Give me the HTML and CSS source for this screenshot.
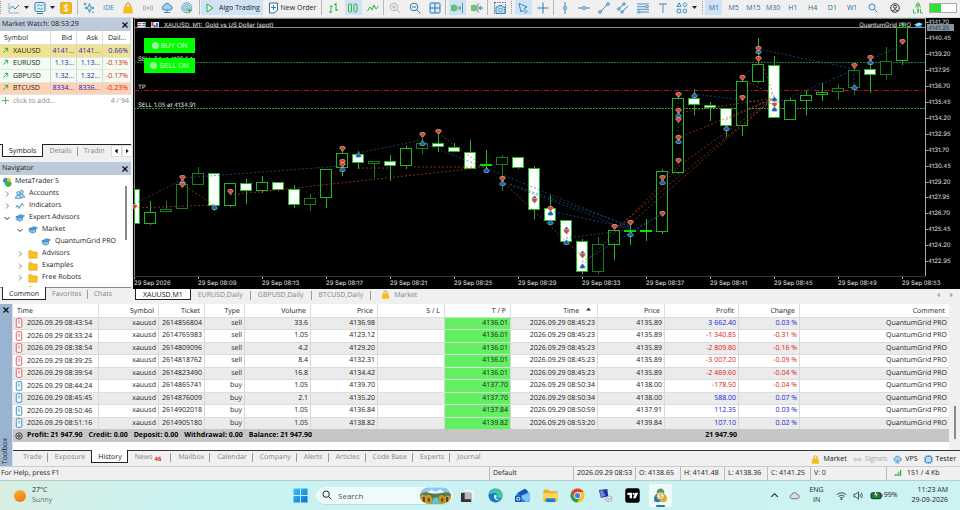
FILE: index.html
```
<!DOCTYPE html>
<html lang="en">
<head>
<meta charset="utf-8">
<title>XAUUSD,M1</title>
<link rel="stylesheet" href="styles.css">
</head>
<body>
<svg class="sprite" aria-hidden="true">
  <symbol id="i-hat" viewBox="0 0 12 12"><path d="M1 4.500 7 2l4.500 1.500L6 6z" fill="#4aa3df" stroke="#1f6fae" stroke-width=".7"/><path d="M3 5.500v3.500l3 .8 3-1.500V4.800L6 6z" fill="#8cc8ee" stroke="#1f6fae" stroke-width=".7"/><path d="M1.500 4.600v4" stroke="#1f6fae" stroke-width=".8"/></symbol>
  <symbol id="i-folder" viewBox="0 0 12 12"><path d="M1 2h4l1 1.500h5V11H1z" fill="#f8c21c" stroke="#d79a00" stroke-width=".6"/></symbol>
  <symbol id="i-bag" viewBox="0 0 12 12"><path d="M4 5V3a2 2 0 0 1 4 0v2" fill="none" stroke="#c58a00" stroke-width="1"/><path d="M2 4.500h8l1 7H1z" fill="#f6bd16"/></symbol>
  <symbol id="i-cloud" viewBox="0 0 12 12"><path d="M3 8a2.300 2.300 0 0 1 0-4.500 3.200 3.200 0 0 1 6 0A2.300 2.300 0 0 1 9.500 8z" fill="#9fd0f2" stroke="#2b7cc0" stroke-width=".9"/><path d="M6 8v2.500M3 10.500h6" stroke="#2b7cc0" stroke-width=".9"/></symbol>
  <symbol id="i-signal" viewBox="0 0 12 12"><g fill="none" stroke="currentColor" stroke-width=".9"><circle cx="6" cy="6" r="1"/><path d="M4 4q-1.300 2 0 4M8 4q1.300 2 0 4M2.300 3q-2 3 0 6M9.700 3q2 3 0 6"/></g></symbol>
  <symbol id="i-doc" viewBox="0 0 8 11"><rect x="1" y=".8" width="6" height="9.400" rx="1" fill="#fff" stroke="currentColor" stroke-width="1"/><path d="M3 3.500h2M3 5.500h2" stroke="currentColor" stroke-width=".9"/></symbol>
  <symbol id="i-up" viewBox="0 0 8 8"><path d="M1.500 6.500l5-5M3 1.500h3.500V5" fill="none" stroke="#23a03a" stroke-width="1"/></symbol>
  <symbol id="i-right" viewBox="0 0 8 8"><path d="M3 1.500 5.500 4 3 6.500" fill="none" stroke="#777" stroke-width=".9"/></symbol>
  <symbol id="i-down" viewBox="0 0 8 8"><path d="M1.500 3 4 5.500 6.500 3" fill="none" stroke="#333" stroke-width="1"/></symbol>
  <symbol id="i-x" viewBox="0 0 8 8"><path d="m1.500 1.500 5 5m0-5-5 5" stroke="#111" stroke-width="1.300"/></symbol>
</svg>

<header class="toolbar">
  <span class="grip"></span>
  <div class="group g-charts">
    <button aria-label="Chart type"><svg viewBox="0 0 12 12"><path d="M1 1v10h10" fill="none" stroke="#9aa" stroke-width=".9"/><path d="m1.500 7 3-3 2.500 3 4-4" fill="none" stroke="#2a82b8" stroke-width="1"/></svg></button>
    <i class="caret"></i>
    <button aria-label="Indicators"><svg viewBox="0 0 12 12"><rect x="1" y="0.500" width="10" height="9" rx="1.500" fill="#dff0f8" stroke="#2a82b8"/><path d="m3 4 2-1.500 2 1.500 2.500-1.500" fill="none" stroke="#2a82b8" stroke-width=".8"/><path d="m3 7.500 2-1.500 2 1.500 2.500-1.500" fill="none" stroke="#35b24a" stroke-width=".8"/><path d="M3 11.500h6" stroke="#2a82b8"/></svg></button>
    <i class="caret"></i>
    <button aria-label="Deposit"><svg viewBox="0 0 12 12"><rect x=".5" y=".5" width="11" height="11" rx="1.500" fill="#f3b91a" stroke="#d79a00" stroke-width=".7"/><path d="M8 3.700Q6 2.500 4.500 3.700T6 6t1.500 2.300T4 8.300M6 2v8" fill="none" stroke="#fff" stroke-width=".9"/></svg></button>
  </div>
  <span class="sep"></span>
  <div class="group g-apps">
    <button aria-label="Assistant"><svg viewBox="0 0 12 12"><path d="m6.500 1.500 1.200 3.300L11 6 7.700 7.200 6.500 10.500 5.300 7.200 2 6l3.300-1.200z" fill="#cfe7f7" stroke="#2a82b8" stroke-width=".9"/><path d="M2 .5v3M.5 2h3M10 9v2.500" stroke="#2a82b8" stroke-width=".8"/></svg></button>
    <button class="word ide">IDE</button>
    <button aria-label="Market"><svg><use href="#i-bag"/></svg></button>
    <button aria-label="Signals" class="faint"><svg><use href="#i-signal"/></svg></button>
    <button aria-label="VPS"><svg><use href="#i-cloud"/></svg></button>
    <button aria-label="Strategy tester"><svg viewBox="0 0 12 12"><g fill="none" stroke="#3586b8" stroke-width=".8"><circle cx="5.800" cy="5.800" r="5"/><circle cx="5.800" cy="5.800" r="3.200"/><circle cx="5.800" cy="5.800" r="1.300"/></g><path d="m6.500 6.500 5 2-2 .8-.8 2.200z" fill="#35b24a"/></svg></button>
  </div>
  <span class="sep"></span>
  <button class="algo on"><svg viewBox="0 0 12 12"><path d="m3 2 6 4-6 4z" fill="#e5f7e9" stroke="#30a648"/></svg>Algo Trading</button>
  <button class="order"><svg viewBox="0 0 12 12"><path d="M2.500 1h8v7l-3 3h-5z" fill="#fff" stroke="#2a6a9b"/><path d="M6.500 3v5M4 5.500h5" stroke="#2a82b8"/></svg>New Order</button>
  <span class="sep"></span>
  <div class="group g-style">
    <button aria-label="Bars"><svg viewBox="0 0 12 12"><path d="M4 3v8M2 10h2M4 4.500h1.500M9 1v8M7 2.500h2M9 8h2" fill="none" stroke="#2cae40"/></svg></button>
    <button aria-label="Candles" class="on"><svg viewBox="0 0 12 12"><rect x="1.500" y="2" width="3" height="8" rx="1" fill="none" stroke="#2cae40"/><rect x="7" y="2" width="3" height="8" rx="1" fill="none" stroke="#2cae40"/></svg></button>
    <button aria-label="Line"><svg viewBox="0 0 12 12"><path d="m.5 9 2.500-4 2 3 2-5 2 4 2.500-3" fill="none" stroke="#2cae40"/></svg></button>
  </div>
  <span class="sep"></span>
  <div class="group g-zoom">
    <button aria-label="Zoom in"><svg viewBox="0 0 12 12"><g fill="none" stroke="#b5b5b5"><circle cx="5" cy="5" r="3.800"/><path d="m8 8 3.500 3.500M5 3v4M3 5h4"/></g></svg></button>
    <button aria-label="Zoom out"><svg viewBox="0 0 12 12"><g fill="none" stroke="#2a78a8"><circle cx="5" cy="5" r="3.800"/><path d="m8 8 3.500 3.500M3 5h4"/></g></svg></button>
    <button aria-label="Tile windows"><svg viewBox="0 0 12 12"><rect x="1" y="1" width="10" height="10" rx="1" fill="#d9ecfa" stroke="#2a78b0"/><path d="M6 1v10M1 6h10" stroke="#2a78b0"/></svg></button>
  </div>
  <span class="sep"></span>
  <div class="group g-scroll">
    <button aria-label="Auto scroll" class="on"><svg viewBox="0 0 12 12"><path d="M1 3v6M3 2.500v7M5 3v6" stroke="#2cae40" stroke-width="1.300"/><path d="M6 6h4M8 4l2 2-2 2" fill="none" stroke="#2cae40"/><path d="M11.500 1v10" stroke="#2a78b0" stroke-width=".8"/></svg></button>
    <button aria-label="Chart shift"><svg viewBox="0 0 12 12"><path d="M1 3v6M3 2.500v7M5 3v6" stroke="#2cae40" stroke-width="1.300"/><path d="M7 1v10" stroke="#888"/><path d="M8.500 6H12M10 4 8.300 6 10 8" fill="none" stroke="#2a78b0"/></svg></button>
  </div>
  <span class="sep"></span>
  <div class="group g-shot"><button aria-label="Screenshot"><svg viewBox="0 0 12 12"><rect x=".5" y=".5" width="11" height="11" fill="none" stroke="#345" stroke-width=".8" stroke-dasharray="1.500 1"/><path d="M2 5h2l1-1.500h3L9 5h2v6.500H2z" fill="#b9dcf4" stroke="#2a78b0" stroke-width=".9"/><circle cx="6.500" cy="8" r="1.600" fill="#fff" stroke="#2a78b0" stroke-width=".8"/></svg></button></div>
  <span class="grip"></span>
  <div class="group g-cursor">
    <button aria-label="Cursor" class="on"><svg viewBox="0 0 12 12"><path d="m2 1.500 8 3.500-3 1.500 3 3-1.500 1.500-3-3L4 10z" fill="#cfe7f7" stroke="#2a78b0" stroke-width=".9"/></svg></button>
    <button aria-label="Crosshair"><svg viewBox="0 0 12 12"><path d="M6 .5v11M.5 6h11" stroke="#2a78b0"/></svg></button>
  </div>
  <span class="sep"></span>
  <div class="group g-draw">
    <button aria-label="Vertical line"><svg viewBox="0 0 12 12"><path d="M6 0v12" stroke="#3486c0"/><circle cx="6" cy="6" r="1.500" fill="#eee" stroke="#3486c0"/></svg></button>
    <button aria-label="Horizontal line"><svg viewBox="0 0 12 12"><path d="M0 6h12" stroke="#3486c0"/><circle cx="6" cy="6" r="1.500" fill="#eee" stroke="#3486c0"/></svg></button>
    <button aria-label="Trend line"><svg viewBox="0 0 12 12"><path d="m2 10 8-8" stroke="#3486c0"/><circle cx="2" cy="10" r="1.300" fill="#eee" stroke="#3486c0"/><circle cx="10" cy="2" r="1.300" fill="#eee" stroke="#3486c0"/></svg></button>
    <button aria-label="Channel"><svg viewBox="0 0 12 12"><path d="m1.500 7 5.500-5M5 10l6-6" stroke="#3486c0"/><circle cx="1.800" cy="7" r="1.200" fill="#eee" stroke="#3486c0"/><circle cx="7" cy="2" r="1.200" fill="#eee" stroke="#3486c0"/><circle cx="5" cy="10" r="1.200" fill="#eee" stroke="#3486c0"/></svg></button>
    <button aria-label="Fibonacci"><svg viewBox="0 0 12 12"><path d="M0 2h12M0 4.700h12M0 7.300h12M0 10h12" stroke="#3486c0" stroke-width=".9"/><circle cx="10" cy="4.700" r="1.200" fill="#eee" stroke="#3486c0" stroke-width=".8"/><circle cx="2" cy="10" r="1.200" fill="#eee" stroke="#3486c0" stroke-width=".8"/></svg></button>
    <button aria-label="Text"><svg viewBox="0 0 12 12"><path d="M2 2h8M6 2v9" stroke="#7aa3c4" stroke-width="1.300"/></svg></button>
    <button aria-label="Objects"><svg viewBox="0 0 12 12"><g fill="#d9ecfa" stroke="#3486c0" stroke-width=".9"><path d="m3 .8 2 3.700H1z"/><path d="m9 .5 2.200 2.200L9 5 6.800 2.700z"/><rect x="1.200" y="7.200" width="3.600" height="3.600" rx=".5"/><circle cx="9" cy="9" r="1.900"/></g></svg></button>
  </div>
  <i class="caret"></i>
  <span class="grip"></span>
  <div class="group g-time">
    <button class="word on">M1</button><button class="word">M5</button><button class="word">M15</button><button class="word">M30</button><button class="word">H1</button><button class="word">H4</button><button class="word">D1</button><button class="word">W1</button>
  </div>
  <div class="group g-user">
    <button aria-label="Search"><svg viewBox="0 0 12 12"><g fill="none" stroke="#3486c0"><circle cx="5" cy="5" r="3"/><path d="m7.300 7.300 3 3"/></g></svg></button>
    <button aria-label="Account"><svg viewBox="0 0 12 12"><g fill="none" stroke="#333"><circle cx="6" cy="6" r="4.300"/><circle cx="6" cy="4.800" r="1.500"/><path d="M3 9q3-3 6 0"/></g></svg></button>
    <button aria-label="Levels"><svg viewBox="0 0 12 12"><g fill="none" stroke="#35b24a" stroke-width=".9"><path d="M6 .5 4 3h4zM3 5.500 6 3l3 2.500M6 3v4M1.500 7v4H4M5 7l1 4 1-4M8.500 7v4H11"/></g></svg></button>
  </div>
  <span class="meter"><i></i></span>
</header>

<main class="main">
  <aside class="side">
    <section class="watch">
      <h2 class="title">Market Watch: 08:53:29<button aria-label="Close Market Watch"><svg><use href="#i-x"/></svg></button></h2>
      <table class="quotes">
        <colgroup><col><col class="q-bid"><col class="q-ask"><col class="q-day"></colgroup>
        <thead><tr><th>Symbol</th><th>Bid</th><th>Ask</th><th>Dail...</th></tr></thead>
        <tbody>
          <tr class="gold"><td><svg><use href="#i-up"/></svg>XAUUSD</td><td>4141...</td><td>4141...</td><td>0.66%</td></tr>
          <tr class="mint"><td><svg><use href="#i-up"/></svg>EURUSD</td><td>1.13...</td><td>1.13...</td><td class="neg">-0.13%</td></tr>
          <tr class="mint"><td><svg><use href="#i-up"/></svg>GBPUSD</td><td>1.32...</td><td>1.32...</td><td class="neg">-0.17%</td></tr>
          <tr class="peach"><td><svg><use href="#i-up"/></svg>BTCUSD</td><td>8334...</td><td>8336...</td><td class="neg">-0.23%</td></tr>
          <tr class="add"><td colspan="3"><svg viewBox="0 0 8 8"><path d="M4 0v8M0 4h8" stroke="#35b24a"/></svg>click to add...</td><td>4 / 94</td></tr>
        </tbody>
      </table>
      <nav class="tabs side-tabs"><a href="#" class="active">Symbols</a><a href="#">Details</a><a href="#">Tradin</a><span class="pager"><button aria-label="Previous tabs" class="prev"></button><button aria-label="Next tabs" class="next"></button></span></nav>
    </section>
    <section class="navigator">
      <h2 class="title">Navigator<button aria-label="Close Navigator"><svg><use href="#i-x"/></svg></button></h2>
      <div class="tree-box">
      <ul class="tree">
        <li class="root"><svg viewBox="0 0 12 12"><path d="M1 5a4 4 0 0 1 5-4l1 4-3 3z" fill="#2b8fd8"/><path d="M6 1a4 4 0 0 1 5 4l-4 1z" fill="#f6bd16"/><path d="M3 8l4-3 4 1a4 4 0 0 1-6 5z" fill="#3bb54a"/></svg>MetaTrader 5</li>
        <li><svg class="tw"><use href="#i-right"/></svg><svg viewBox="0 0 12 12"><g fill="#b9dcf4" stroke="#2b7cc0" stroke-width=".8"><circle cx="8" cy="3.500" r="2"/><path d="M5 10q0-4 3-4t3.500 4z"/><circle cx="4" cy="5" r="2"/><path d="M.5 11.500q0-4 3.500-4t3.500 4z"/></g></svg>Accounts</li>
        <li><svg class="tw"><use href="#i-right"/></svg><svg viewBox="0 0 12 12"><path d="m1 8 2-3 2 4 3-6 3 3" fill="none" stroke="#2b7cc0" stroke-width=".9"/><path d="m1 5 3 3 3-3 3-2" fill="none" stroke="#35b24a" stroke-width=".8"/></svg>Indicators</li>
        <li><svg class="tw"><use href="#i-down"/></svg><svg><use href="#i-hat"/></svg>Expert Advisors</li>
        <li class="l2"><svg class="tw"><use href="#i-down"/></svg><svg><use href="#i-hat"/></svg>Market</li>
        <li class="l3"><svg class="tw"></svg><svg><use href="#i-hat"/></svg>QuantumGrid PRO</li>
        <li class="l2"><svg class="tw"><use href="#i-right"/></svg><svg><use href="#i-folder"/></svg>Advisors</li>
        <li class="l2"><svg class="tw"><use href="#i-right"/></svg><svg><use href="#i-folder"/></svg>Examples</li>
        <li class="l2"><svg class="tw"><use href="#i-right"/></svg><svg><use href="#i-folder"/></svg>Free Robots</li>
        <li class="l2"><svg class="tw"></svg><svg><use href="#i-folder"/></svg></li>
      </ul>
      <span class="thumb"></span>
      </div>
      <nav class="tabs side-tabs"><a href="#" class="active">Common</a><a href="#">Favorites</a><a href="#">Chats</a></nav>
    </section>
  </aside>
  <section class="work">
    <div class="chart">
      <svg id="plot" viewBox="133 18 827 271" preserveAspectRatio="xMinYMin meet" role="img" aria-label="XAUUSD one minute candles"></svg>
      <div class="trade-buttons"><button><i></i>BUY ON</button><button><i></i>SELL ON</button></div>
    </div>
    <nav class="tabs chart-tabs"><a href="#" class="active">XAUUSD,M1</a><a href="#">EURUSD,Daily</a><a href="#">GBPUSD,Daily</a><a href="#">BTCUSD,Daily</a><a href="#" class="shop"><svg><use href="#i-bag"/></svg>Market</a><span class="pager plain"><button aria-label="Previous charts" class="prev"></button><button aria-label="Next charts" class="next"></button></span></nav>
  </section>
</main>

<section class="toolbox">
  <div class="spine"><button aria-label="Close Toolbox"><svg><use href="#i-x"/></svg></button><span>Toolbox</span></div>
  <div class="toolbox-body">
    <div class="scroller">
    <table class="deals">
      <colgroup><col class="c86"><col class="c60"><col class="c46"><col class="c40"><col class="c66"><col class="c67"><col class="c67"><col class="c66"><col class="c87"><col class="c67"><col class="c74"><col class="c61"><col></colgroup>
      <thead><tr><th>Time</th><th>Symbol</th><th>Ticket</th><th>Type</th><th>Volume</th><th>Price</th><th>S / L</th><th>T / P</th><th>Time <i class="sort"></i></th><th>Price</th><th>Profit</th><th>Change</th><th>Comment</th></tr></thead>
      <tbody>
        <tr class="sell"><td><svg><use href="#i-doc"/></svg>2026.09.29 08:43:54</td><td>xauusd</td><td>2614856804</td><td>sell</td><td>33.6</td><td>4136.98</td><td></td><td>4136.01</td><td>2026.09.29 08:45:23</td><td>4135.89</td><td class="pos">3 662.40</td><td class="pos">0.03 %</td><td>QuantumGrid PRO</td></tr>
        <tr class="sell"><td><svg><use href="#i-doc"/></svg>2026.09.29 08:33:24</td><td>xauusd</td><td>2614765983</td><td>sell</td><td>1.05</td><td>4123.12</td><td></td><td>4136.01</td><td>2026.09.29 08:45:23</td><td>4135.89</td><td class="neg">-1 340.85</td><td class="neg">-0.31 %</td><td>QuantumGrid PRO</td></tr>
        <tr class="sell"><td><svg><use href="#i-doc"/></svg>2026.09.29 08:38:54</td><td>xauusd</td><td>2614809096</td><td>sell</td><td>4.2</td><td>4129.20</td><td></td><td>4136.01</td><td>2026.09.29 08:45:23</td><td>4135.89</td><td class="neg">-2 809.80</td><td class="neg">-0.16 %</td><td>QuantumGrid PRO</td></tr>
        <tr class="sell"><td><svg><use href="#i-doc"/></svg>2026.09.29 08:39:25</td><td>xauusd</td><td>2614818762</td><td>sell</td><td>8.4</td><td>4132.31</td><td></td><td>4136.01</td><td>2026.09.29 08:45:23</td><td>4135.89</td><td class="neg">-3 007.20</td><td class="neg">-0.09 %</td><td>QuantumGrid PRO</td></tr>
        <tr class="sell"><td><svg><use href="#i-doc"/></svg>2026.09.29 08:39:54</td><td>xauusd</td><td>2614823490</td><td>sell</td><td>16.8</td><td>4134.42</td><td></td><td>4136.01</td><td>2026.09.29 08:45:23</td><td>4135.89</td><td class="neg">-2 469.60</td><td class="neg">-0.04 %</td><td>QuantumGrid PRO</td></tr>
        <tr class="buy"><td><svg><use href="#i-doc"/></svg>2026.09.29 08:44:24</td><td>xauusd</td><td>2614865741</td><td>buy</td><td>1.05</td><td>4139.70</td><td></td><td>4137.70</td><td>2026.09.29 08:50:34</td><td>4138.00</td><td class="neg">-178.50</td><td class="neg">-0.04 %</td><td>QuantumGrid PRO</td></tr>
        <tr class="buy"><td><svg><use href="#i-doc"/></svg>2026.09.29 08:45:45</td><td>xauusd</td><td>2614876009</td><td>buy</td><td>2.1</td><td>4135.20</td><td></td><td>4137.70</td><td>2026.09.29 08:50:34</td><td>4138.00</td><td class="pos">588.00</td><td class="pos">0.07 %</td><td>QuantumGrid PRO</td></tr>
        <tr class="buy"><td><svg><use href="#i-doc"/></svg>2026.09.29 08:50:46</td><td>xauusd</td><td>2614902018</td><td>buy</td><td>1.05</td><td>4136.84</td><td></td><td>4137.84</td><td>2026.09.29 08:50:59</td><td>4137.91</td><td class="pos">112.35</td><td class="pos">0.03 %</td><td>QuantumGrid PRO</td></tr>
        <tr class="buy"><td><svg><use href="#i-doc"/></svg>2026.09.29 08:51:16</td><td>xauusd</td><td>2614905180</td><td>buy</td><td>1.05</td><td>4138.82</td><td></td><td>4139.82</td><td>2026.09.29 08:53:20</td><td>4139.84</td><td class="pos">107.10</td><td class="pos">0.02 %</td><td>QuantumGrid PRO</td></tr>
      </tbody>
      <tfoot><tr><td colspan="10"><div class="totals"><svg viewBox="0 0 8 8"><circle cx="4" cy="4" r="3.200" fill="none" stroke="#222" stroke-width=".8"/><path d="M4 2v4M2 4h4" stroke="#222" stroke-width=".8"/></svg><span>Profit: 21 947.90</span><span>Credit: 0.00</span><span>Deposit: 0.00</span><span>Withdrawal: 0.00</span><span>Balance: 21 947.90</span></div></td><td>21 947.90</td><td colspan="2"></td></tr></tfoot>
    </table>
    <span class="track"><i></i></span>
    </div>
    <nav class="tabs box-tabs"><a href="#">Trade</a><a href="#">Exposure</a><a href="#" class="active">History</a><a href="#">News<sub>46</sub></a><a href="#">Mailbox</a><a href="#">Calendar</a><a href="#">Company</a><a href="#">Alerts</a><a href="#">Articles</a><a href="#">Code Base</a><a href="#">Experts</a><a href="#">Journal</a>
      <span class="services"><button><svg><use href="#i-bag"/></svg>Market</button><button class="faint"><svg><use href="#i-signal"/></svg>Signals</button><button><svg><use href="#i-cloud"/></svg>VPS</button><button><svg viewBox="0 0 12 12"><path d="M3.500 0v12M6 0v12M8.500 0v12M0 3.500h12M0 6h12M0 8.500h12" stroke="#2b7cc0" stroke-width=".9"/><rect x="2" y="2" width="8" height="8" rx="1" fill="#b9dcf4" stroke="#2b7cc0"/></svg>Tester</button></span>
    </nav>
  </div>
</section>

<footer class="status">
  <span>For Help, press F1</span><span>Default</span><span>2026.09.29 08:53</span><span>O: 4138.65</span><span>H: 4141.48</span><span>L: 4138.36</span><span>C: 4141.25</span><span>V: 0</span><span class="net"><svg viewBox="0 0 8 8"><path d="M1 8V6M3 8V5M5 8V3M7 8V1" stroke="#2cae40" stroke-width="1.300"/></svg>151 / 4 Kb</span>
</footer>

<div class="taskbar">
  <div class="weather"><i class="sun"></i><p>27°C<br><span>Sunny</span></p></div>
  <div class="dock">
    <button aria-label="Start" class="start"><svg viewBox="0 0 16 16"><defs><linearGradient id="win" x1="0" y1="0" x2="1" y2="1"><stop stop-color="#3cc4f7"/><stop offset="1" stop-color="#0a6fd0"/></linearGradient></defs><path d="M.5.5h7v7h-7zM8.500.5h7v7h-7zM.5 8.500h7v7h-7zM8.500 8.500h7v7h-7z" fill="url(#win)"/></svg></button>
    <label class="search"><svg viewBox="0 0 12 12"><circle cx="5" cy="5" r="3.800" fill="none" stroke="#222" stroke-width="1.200"/><path d="m8 8 3 3" stroke="#222" stroke-width="1.200"/></svg><input type="text" placeholder="Search" aria-label="Search">
      <svg class="scene" viewBox="0 0 32 17"><defs><clipPath id="oval"><rect width="32" height="17" rx="8.500"/></clipPath></defs><g clip-path="url(#oval)"><path fill="#8ec6ef" d="M0 0h32v17H0z"/><path fill="#e8f2f8" d="m8 5 4-2.500 4 2 5-2.500 5 4H8z"/><path fill="#5b7a45" d="M0 7q5-3 10-1t12 0 10 1v10H0z"/><path fill="#c99a2b" d="M0 9q3-3 6 0 3-3 6 1l2 7H0zM19 10q3-4 6 0 4-3 7 0v7H19z"/><path fill="#5cc5d6" d="m14 11 4-1 2 7h-8z"/><path fill="#3d4a1e" d="M3 10h2v5H3zM8 11h2v4H8zM22 11h2v4h-2zM27 10h2v5h-2z"/></g></svg></label>
    <div class="apps">
    <button aria-label="Task view"><svg viewBox="0 0 16 16"><rect x="5" y="2" width="10" height="10" fill="#eef3f3"/><rect x="1" y="5" width="11" height="10" rx="1" fill="#333"/><rect x="5" y="5" width="7" height="7" fill="#bfb8bb"/></svg></button>
    <button aria-label="Edge"><svg viewBox="0 0 16 16"><circle cx="8" cy="8" r="7.500" fill="#1477c9"/><path d="M.7 7A7.500 7.500 0 0 1 15.500 8q0 3-3.500 3-3 0-2-2.500Q9.500 5 6 5.500 2.500 5.800.7 7z" fill="#43c9a2"/><path d="M.7 7A7.500 7.500 0 0 1 8 .5Q3 3 .7 7z" fill="#2ea6df"/><path d="M6.500 7.500q-1 4 3 5.500 3 .5 5-1-2 1-4 .2Q7.500 11 9.500 8.500 8.500 6.500 6.500 7.500z" fill="#dff3fb"/></svg></button>
    <button aria-label="Outlook"><svg viewBox="0 0 16 16"><path d="m1.500 6 9-5.500 5 5v8q0 1.500-1.500 1.500H3q-1.500 0-1.500-1.500z" fill="#2c86e4"/><path d="m5 9 10.500-4v8.500L12 15z" fill="#7cc4fb"/><path d="m3 5 8-4 3 3-8 4z" fill="#174fb5"/><rect x="0" y="8" width="7" height="7" rx="1.500" fill="#0d56b9"/><circle cx="3.500" cy="11.500" r="1.700" fill="none" stroke="#fff"/></svg></button>
    <button aria-label="Files"><svg viewBox="0 0 16 16"><path d="M.5 2.500q0-1 1-1h4l2 2h7q1 0 1 1V13q0 1.500-1 1.500h-13q-1 0-1-1.500z" fill="#f2ac1c"/><path d="M.5 5.500h15V12H.5z" fill="#ffd65a"/><path d="M3 11h10v4H3z" fill="#1b7fd0"/></svg></button>
    <button aria-label="Chrome"><svg viewBox="0 0 16 16"><circle cx="8" cy="8" r="7.500" fill="#f9c416"/><path d="M1.500 4.300A7.500 7.500 0 0 1 14.500 4.300H8L4.800 10z" fill="#e2402e"/><path d="M1.500 4.300A7.500 7.500 0 0 0 7.500 15.500L11 10H4.800z" fill="#2ba24c"/><circle cx="8" cy="8" r="3.600" fill="#fff"/><circle cx="8" cy="8" r="2.800" fill="#3b7ded"/></svg></button>
    <button aria-label="Remote desktop"><svg viewBox="0 0 16 16"><path d="m1 2 9-1 1 8-8 1.500z" fill="#26349b"/><path d="m2 3 3-.5 3 6-5 1z" fill="#6d87e0"/><path d="m5 11 6-1 3 3-6 2z" fill="#cfd5dc"/><circle cx="12" cy="11.500" r="3" fill="#eceff1" stroke="#aab"/><path d="m10.500 11.500 1.200 1 2-2.200" fill="none" stroke="#666" stroke-width=".7"/></svg></button>
    <button aria-label="TradingView"><svg viewBox="0 0 16 16"><rect x=".3" y=".3" width="15.400" height="15.400" rx="2.500" fill="#000"/><path d="M2.500 5h5v6H5V7.500H2.500zM11 5h3l-2.500 6h-3z" fill="#fff"/><circle cx="9.200" cy="6.200" r="1.200" fill="#fff"/></svg></button>
    <button aria-label="MetaTrader" class="running"><svg viewBox="0 0 16 16"><path d="M8 .5a4 4 0 0 1 4 4.500L8 9 4 5a4 4 0 0 1 4-4.500z" fill="#4e9b5b"/><path d="M3.500 6 8 9v5.500q-3 1.500-6.500-.5-1.500-4 2-8z" fill="#2a79a8"/><path d="M12.500 6q3.500 4 2 8-3.500 2-6.500.5V9z" fill="#e6ac29"/><circle cx="8" cy="8.500" r="4" fill="#f4ead0" stroke="#b48b37" stroke-width=".8"/><path d="M9.500 7Q8 6 7 7t1 1.500T9 10.200 6.500 10" fill="none" stroke="#b48b37" stroke-width=".9"/></svg></button>
    </div>
  </div>
  <div class="tray">
    <button aria-label="Hidden icons"><svg viewBox="0 0 12 12"><path d="m2.500 7.500 3.500-3.500 3.500 3.500" fill="none" stroke="#222" stroke-width="1.200"/></svg></button>
    <button aria-label="OneDrive" class="od"><svg viewBox="0 0 12 12"><path d="M3 9.500a2.300 2.300 0 0 1 0-4.500 3.200 3.200 0 0 1 6 0 2.300 2.300 0 0 1 .5 4.500z" fill="#dcdcdf" stroke="#555" stroke-width=".8"/></svg></button>
    <span class="lang">ENG<br>IN</span>
    <svg viewBox="0 0 12 12"><g fill="none" stroke="#222" stroke-width=".9"><path d="M1 5q5-4 10 0M2.700 7q3.300-2.800 6.600 0M4.300 8.800q1.700-1.400 3.400 0"/></g><circle cx="6" cy="10" r=".8"/></svg>
    <svg viewBox="0 0 12 12"><path d="M1 4.500h2L6 2v8L3 7.500H1z" fill="none" stroke="#222" stroke-width=".8"/><path d="M7.500 4.500q1 1.500 0 3M9.200 3q2 3 0 6" fill="none" stroke="#222" stroke-width=".8"/></svg>
    <svg class="batt" viewBox="0 0 13 12"><rect x=".5" y="3" width="11" height="6.500" rx="1.500" fill="#1c7c2e" stroke="#123"/><path d="M12.500 5v2.500" stroke="#123"/><path d="m6 1-2 4h2L5 8l3-4H6z" fill="#fff"/></svg>
    <span class="pct">99%</span>
    <span class="clock">11:23 AM<br>29-09-2026</span>
  </div>
</div>
<script src="chart.js"></script>
</body>
</html>
```
FILE: styles.css
```
* { box-sizing: border-box; }
body {
  margin: 0;
  min-height: 100vh;
  display: flex;
  flex-direction: column;
  background: #f0f0f0;
  color: #222;
  font: 7px/10px "Open Sans", "Noto Sans", sans-serif;
  text-rendering: geometricPrecision;
  overflow-x: hidden;
}
button { font: inherit; color: inherit; border: 0; padding: 0; background: none; display: inline-flex; align-items: center; justify-content: center; }
a { color: inherit; text-decoration: none; }
table { border-collapse: separate; border-spacing: 0; table-layout: fixed; width: 100%; }
td, th { padding: 0; font-weight: 400; white-space: nowrap; overflow: hidden; }
ul, p, h2 { margin: 0; padding: 0; }
.sprite { position: absolute; width: 0; height: 0; }
.faint { color: #aaa; }
.pos { color: #2222d8; }
.neg { color: #e02020; }

/* Toolbar */
.toolbar { display: flex; align-items: center; height: 18px; padding-bottom: 2px; border-bottom: 1px solid #dadada; color: #223; }
.toolbar svg { width: 12px; height: 12px; flex: none; }
.toolbar button { height: 15px; }
.group { display: grid; grid-auto-flow: column; grid-auto-columns: 1fr; justify-items: center; align-items: center; flex: none; }
.group button { width: 17px; }
.sep { width: 1px; height: 15px; background: #b8b8b8; flex: none; margin-right: 1px; }
.grip { width: 2px; height: 13px; border-left: 1px dotted #999; flex: none; }
.on { background: #d0e3f5; }
.caret { width: 5px; height: 3px; background: #222; clip-path: polygon(0 0, 100% 0, 50% 100%); flex: none; }
.word { color: #2e6a96; }
.ide { color: #2a82b8; }
.g-charts { display: flex; width: 75px; padding-left: 4px; gap: 3px; }
.g-charts button { width: 15px; }
.g-apps { width: 118px; margin-right: 2px; }
.algo { width: 62px; gap: 3px; flex: none; }
.order { width: 57px; gap: 2px; margin-right: 1px; flex: none; }
.g-style { width: 60px; }
.g-zoom { width: 60px; }
.g-scroll { width: 40px; }
.g-shot { width: 22px; }
.g-cursor { width: 40px; }
.g-draw { width: 137px; }
.g-draw + .caret { margin-right: 5px; }
.g-time { width: 158px; }
.g-user { width: 67px; }
.meter { width: 28px; height: 10px; border: 1px solid #aaa; background: #fff; flex: none; }
.meter i { display: block; width: 42%; height: 100%; background: #35e035; }

/* Side panels */
.main { flex: 1; display: flex; gap: 2px; padding-bottom: 3px; }
.side { width: 131px; flex: none; display: flex; flex-direction: column; }
.title { height: 13px; flex: none; display: flex; align-items: center; justify-content: space-between; padding: 1px 2px 0; background: #bccada; font-size: 7px; font-weight: 400; }
.title svg { width: 8px; height: 8px; }
.watch { height: 144px; display: flex; flex-direction: column; background: #fff; }
.navigator { flex: 1; display: flex; flex-direction: column; background: #fff; }
.q-bid, .q-ask { width: 26px; }
.q-day { width: 28px; }
.quotes th { height: 14px; text-align: right; padding: 2px 4px 0 0; border-bottom: 1px solid #ddd; border-right: 1px solid #ddd; }
.quotes th:first-child { text-align: left; padding-left: 4px; }
.quotes td { height: 12px; padding: 1px 2px 0 0; text-align: right; color: #2a22c8; border-right: 1px solid #d5d5d5; border-bottom: 1px solid #e5e5e5; }
.quotes tr:nth-child(odd) td { height: 13px; }
.quotes td:first-child { text-align: left; color: #222; }
.quotes td.neg { color: #e02020; }
.quotes td svg { width: 7px; height: 7px; margin: 0 4px 0 2px; vertical-align: -1px; }
.gold { background: #f0e28e; }
.mint { background: #f0fdf0; }
.peach { background: #ffd2b3; }
.quotes .add td { color: #888; border: 0; }

.tabs { display: flex; color: #858585; background: #f0f0f0; }
.tabs a { padding: 0 6px; height: 12px; line-height: 14px; position: relative; white-space: nowrap; }
.tabs a + a:not(.active)::before { content: ""; position: absolute; left: -1px; top: 2px; height: 9px; border-left: 1px solid #999; }
.tabs a.active + a::before { display: none; }
.tabs a.active { background: #fff; color: #111; border: solid #222; border-width: 0 1px 1px; }
.side-tabs { margin-top: auto; height: 14px; padding-left: 2px; border-top: 1px solid #222; }
.side-tabs a.active { margin-top: -1px; height: 13px; line-height: 15px; }
.watch .tabs { height: 18px; }
.navigator .tabs { border-color: #888; }
.pager { display: flex; margin-left: auto; }
.pager button { width: 11px; height: 12px; background: #fff; border: 1px solid #ddd; }
.pager button::before { content: ""; width: 3px; height: 5px; background: #111; }
.prev::before { clip-path: polygon(100% 0, 100% 100%, 0 50%); }
.next::before { clip-path: polygon(0 0, 0 100%, 100% 50%); }
.pager.plain { padding-right: 2px; }
.pager.plain button { border: 0; width: 13px; background: none; }
.pager.plain button::before { background: #aaa; }

.tree-box { display: flex; height: 112px; overflow: hidden; }
.tree { list-style: none; flex: 1; padding: 1px 0 0 2px; }
.tree li { display: flex; align-items: center; gap: 4px; height: 12px; white-space: nowrap; }
.tree svg { width: 10px; height: 10px; flex: none; }
.tree .tw { width: 8px; height: 8px; margin-left: 1px; }
.tree .root { gap: 3px; }
.tree .l2 { padding-left: 13px; }
.tree .l3 { padding-left: 26px; }
.thumb { width: 2px; height: 54px; margin: 11px 4px 0 0; background: #8a8a8a; flex: none; }

/* Chart */
.work { flex: 1; min-width: 0; display: flex; flex-direction: column; }
.chart { position: relative; flex: 1; background: #000; }
.chart > svg { display: block; width: 100%; height: auto; font: 6px Inter, "Open Sans", sans-serif; }
.trade-buttons { position: absolute; left: 11px; top: 20px; display: grid; gap: 5px; }
.trade-buttons button { width: 51px; height: 15px; gap: 2px; background: #0f0; color: #d8ffd0; font: 7px "Liberation Sans", Arial, sans-serif; }
.trade-buttons i { width: 7px; height: 7px; border-radius: 50%; background: #98f598; }
.chart-tabs { height: 12px; padding-left: 2px; }
.chart-tabs a { padding: 0 8px 0 7px; }
.chart-tabs a.active { height: 11px; padding: 0 7px; }
.shop svg { width: 9px; height: 9px; margin: 0 4px 0 3px; vertical-align: -2px; }

/* Toolbox */
.toolbox { display: flex; }
.spine { width: 13px; flex: none; display: flex; flex-direction: column; justify-content: space-between; align-items: center; padding: 2px 0; background: #99b4d1; border-right: 1px solid #dde; }
.spine svg { width: 8px; height: 8px; }
.spine span { writing-mode: vertical-rl; transform: rotate(180deg); }
.toolbox-body { flex: 1; min-width: 0; }
.scroller { display: flex; height: 147px; background: #fff; border-bottom: 1px solid #333; }
.deals { flex: 1; align-self: flex-start; }
.c40 { width: 40px; } .c46 { width: 46px; } .c60 { width: 60px; } .c61 { width: 61px; }
.c66 { width: 66px; } .c67 { width: 67px; } .c74 { width: 74px; } .c86 { width: 86px; } .c87 { width: 87px; }
.deals th { height: 13px; text-align: right; padding: 2px 4px 0 0; border-right: 1px solid #ddd; }
.deals th:first-child { text-align: left; padding-left: 4px; }
.deals th:nth-child(9) { padding-right: 6px; }
.sort { display: inline-block; width: 5px; height: 3px; margin-left: 5px; vertical-align: 2px; background: #333; clip-path: polygon(50% 0, 100% 100%, 0 100%); }
.deals tbody td { height: 12px; text-align: right; padding-right: 2px; border-right: 1px solid #d8d8d8; border-top: 1px solid #dcdcdc; }
.deals tbody tr:nth-child(even) td { height: 13px; }
.deals tbody tr:nth-child(odd) { background: #ebebeb; }
.deals tbody td:nth-child(8) { background: #61f061; }
.deals tbody td:first-child, .deals tfoot td:first-child { text-align: left; }
.deals td:first-child svg { width: 8px; height: 10px; margin: 0 4px 0 2px; vertical-align: middle; }
.sell svg { color: #e05050; }
.buy svg { color: #2a82b8; }
.deals tfoot td { height: 13px; text-align: right; padding-right: 2px; background: #c6c6c6; color: #000; font-weight: 700; }
.totals { display: flex; align-items: center; gap: 6px; }
.totals svg { flex: none; }
.deals td:first-child .totals svg { margin: 0 -2px 0 2px; }
.deals tbody td:last-child, .deals th:last-child { border-right: 0; }
.track { width: 11px; flex: none; display: flex; justify-content: center; align-items: flex-end; padding-bottom: 11px; background: #f0f0f0; }
.track i { width: 2px; height: 33px; background: #888; }
.box-tabs { height: 15px; padding-left: 3px; align-items: flex-start; }
.box-tabs a { padding: 0 6px 0 7px; }
.box-tabs a.active { margin-top: -1px; height: 13px; padding: 0 5px 0 6px; line-height: 16px; }
.box-tabs sub { color: #e02020; font: 700 6px/6px "Open Sans", sans-serif; margin-left: 2px; padding-right: 4px; vertical-align: -2px; }
.services { display: flex; gap: 6px; margin-left: auto; padding: 3px 4px 0 0; color: #111; }
.services svg { width: 9px; height: 9px; margin-right: 3px; }
.services .faint { color: #aaa; }

/* Status bar */
.status { display: grid; grid-template-columns: 1fr 84px 62px 45px 44px 43px 43px 76px 74px; height: 14px; border-top: 1px solid #ccc; line-height: 14px; }
.status span { padding-left: 3px; border-left: 1px solid #bbb; white-space: nowrap; }
.status span:first-child { border: 0; padding-left: 1px; }
.net svg { width: 8px; height: 7px; margin: 0 5px 0 4px; vertical-align: -1px; }

/* Taskbar */
.taskbar { display: grid; grid-template-columns: 1fr auto 1fr; align-items: center; height: 30px; padding-left: 5px; background: linear-gradient(90deg, #d8eee2, #c9f2f3 20%, #cdf2f2); border-top: 1px solid #b5cfcf; }
.weather { display: flex; align-items: center; gap: 6px; padding-left: 9px; color: #333; }
.weather span { color: #667; }
.sun { width: 12px; height: 12px; border-radius: 50%; background: linear-gradient(160deg, #f7b731, #f0701a); }
.dock { display: flex; align-items: center; }
.dock button { width: 23px; height: 23px; border-radius: 2px; }
.dock .start { width: 18px; }
.dock button svg { width: 15px; height: 15px; }
.apps { display: grid; grid-template-columns: repeat(8, 1fr); justify-items: center; width: 220px; }
.search { display: flex; align-items: center; width: 137px; height: 18px; margin: 0 1px 0 7px; padding: 0 2px 0 6px; border-radius: 9px; background: #eefbfb; border-bottom: 1px solid #b8dede; }
.search > svg { width: 10px; height: 10px; flex: none; }
.search input { flex: 1; min-width: 0; margin-left: 4px; border: 0; background: none; font: 8px "Open Sans", sans-serif; }
.search input::placeholder { color: #555; }
.search .scene { width: 31px; height: 17px; }
.running { position: relative; background: #eefafa; }
.running::after { content: ""; position: absolute; left: 7px; right: 7px; bottom: 0; height: 2px; border-radius: 1px; background: #2a7a96; }
.tray { display: flex; align-items: center; justify-content: flex-end; gap: 6px; padding-right: 12px; }
.tray svg { width: 11px; height: 11px; }
.tray .od { margin: 0 3px; }
.lang { text-align: center; margin-right: 6px; }
.tray .batt { width: 13px; }
.pct { margin-left: -5px; }
.clock { text-align: right; margin-left: 8px; }
```
FILE: chart.js
```
// Candle columns sit 16 units apart: [high, top, bottom, low, kind]
// g = rising, d = rising (dim), w = falling, x = doji
const FIRST = 134, STEP = 16;
const candles = [
  [189,189,224,224,'w'],[201,212,224,225,'g'],[201,209,212,212,'d'],[180,184,209,209,'d'],
  [167,173,185,185,'d'],[173,173,206,211,'w'],[183,183,206,207,'g'],[179,183,191,204,'w'],
  [176,182,191,193,'g'],[182,182,190,191,'w'],[185,189,205,208,'w'],[194,198,205,211,'d'],
  [169,169,198,208,'g'],[150,153,168,176,'g'],[151,154,163,169,'w'],[161,161,164,178,'d'],
  [155,161,166,181,'w'],[146,148,166,169,'g'],[138,143,149,154,'d'],[135,143,147,152,'w'],
  [143,147,152,152,'w'],[140,152,169,169,'w'],[150,165,165,168,'x'],[155,157,165,191,'d'],
  [157,157,168,169,'w'],[166,168,210,219,'w'],[195,208,221,223,'w'],[220,220,242,244,'w'],
  [239,241,272,274,'w'],[237,244,272,274,'d'],[230,230,245,260,'g'],[226,231,231,245,'x'],
  [219,231,231,241,'x'],[169,171,232,234,'g'],[97,98,173,174,'g'],[89,98,105,115,'w'],
  [102,105,108,121,'w'],[108,108,126,137,'w'],[77,81,126,136,'g'],[38,64,82,83,'g'],
  [56,65,118,118,'w'],[98,100,120,120,'g'],[91,95,101,115,'g'],[83,92,95,101,'g'],
  [84,88,92,100,'d'],[64,70,88,95,'d'],[62,69,75,93,'w'],[47,61,75,80,'d'],[22,27,61,65,'g']
];
// Deal arrows: r = sell, b = buy
const deals = {
  134:'r207', 182:'b182 r178 r185', 214:'b207', 230:'r192', 342:'b169 r149 r162 r165', 358:'b155',
  422:'r135 b143', 438:'r132', 486:'b170', 502:'b183 r179', 534:'b198 r201', 550:'b213 r209 b222',
  566:'b229 r232 b242', 582:'b253 r256 b266', 614:'r227', 630:'r223 b234', 662:'b182 r178 r214',
  678:'r95 b115 r111 r120 b141 r138 r161', 694:'b95', 726:'b128', 742:'r78 r98', 758:'b51 r49 r59',
  774:'b99 b109 r105', 854:'r66 b87', 870:'b62 r58', 902:'r42'
};
const buyLinks = [[134,204,182,180],[182,178,342,166],[358,153,422,140],[422,143,486,168],[486,168,630,227],
  [502,182,630,230],[510,184,630,226],[550,211,630,228],[566,238,630,230],[582,262,662,214],[630,232,662,214],
  [694,94,774,104],[742,77,758,64],[758,49,854,69],[774,104,854,70],[870,60,902,45],[678,98,678,140],[854,70,854,88],[662,180,678,162]];
const sellLinks = [[134,208,214,205],[182,184,214,205],[230,195,470,169],[414,167,486,167],[438,133,486,168],[358,168,390,168],
  [502,181,582,256],[582,266,678,168],[614,230,774,98],[630,224,774,98],[662,178,774,98],[678,138,774,98],[678,113,774,98],
  [726,120,774,98],[742,79,774,95],[758,50,774,97]];

const plot = document.getElementById('plot');
let out = '';
const line = (x1, y1, x2, y2, color, dash) =>
  `<line x1="${x1}" y1="${y1}" x2="${x2}" y2="${y2}" stroke="${color}"${dash ? ` stroke-dasharray="${dash}"` : ''}/>`;
const text = (x, y, value, anchor) =>
  `<text x="${x}" y="${y}" fill="#e4e4e4"${anchor ? ` text-anchor="${anchor}"` : ''}>${value}</text>`;

// Frame and price levels
out += '<path d="M925.500 18.500H134.500V276.500" fill="none" stroke="#888"/>';
out += line(134, 276.5, 925, 276.5, '#333') + line(925.5, 18, 925.5, 276, '#aaa');
out += line(134, 27.5, 925, 27.5, '#888');
out += line(134, 62.5, 925, 62.5, '#1f7a35', '2 1') + line(134, 108.5, 925, 108.5, '#35994a', '2 1');
out += line(134, 90.5, 925, 90.5, '#b8141c', '5 2 1 2');

candles.forEach(([high, top, bottom, low, kind], i) => {
  const x = FIRST + STEP * i;
  const color = kind === 'd' ? '#128012' : '#1db81d';
  const left = Math.max(x - 6, 134);
  const width = x + 6 - left;
  if (high < top) out += line(x + .5, high, x + .5, top, color);
  if (low > bottom) out += line(x + .5, bottom, x + .5, low, color);
  if (kind === 'x') out += `<rect x="${left}" y="${top - 1}" width="12" height="2" fill="#00e800"/>`;
  else out += `<rect x="${left + .5}" y="${top + .5}" width="${width - 1}" height="${bottom - top - 1}" fill="${kind === 'w' ? '#fff' : '#000'}" stroke="${color}"/>`;
});
const link = (points, color) =>
  line(...points, color, '2 2').replace('/>', ' stroke-width=".8" opacity=".8"/>');
buyLinks.forEach(p => { out += link(p, '#2766a8'); });
sellLinks.forEach(p => { out += link(p, '#c84a28'); });
for (const x in deals) {
  deals[x].split(' ').forEach(d => {
    const sell = d[0] === 'r';
    out += `<path transform="translate(${+x + .5} ${d.slice(1)})${sell ? '' : ' scale(1 -1)'}" d="M-3-1l1.200-1.500h3.600L3-1 0 2.500z" fill="${sell ? '#d8492c' : '#1a62ac'}" stroke="${sell ? '#f3dcd6' : '#c4dcf0'}" stroke-width=".5"/>`;
  });
}

// Price axis
for (let i = 0; i < 16; i++) {
  const y = Math.round(22 + i * 15.95);
  out += line(925, y + .5, 928, y + .5, '#aaa') + text(928, y + 2, (4141.7 - i * 1.25).toFixed(2));
}
out += '<rect x="927" y="24" width="27" height="7" fill="#8593a3"/><text x="928" y="30" fill="#26303a">4141.25</text>';

// Time axis
['2026','08:09','08:13','08:17','08:21','08:25','08:29','08:33','08:37','08:41','08:45','08:49','08:53'].forEach((t, i) => {
  const x = FIRST + i * 64;
  out += line(x + .5, 277, x + .5, 279, '#aaa') + text(x, 285, '29 Sep ' + t);
});

// Labels
out += '<path d="M137.500 22h8v5.500h-8z" fill="#e8e8f4"/><path d="M138 23.500h3M138 25.500h3" stroke="#e0452c"/><path d="M142 23.500h3M142 25.500h3" stroke="#3b6fd0"/>';
out += '<path d="M151 22h8v5.500h-8z" fill="#e8e8f4"/><path d="M152.500 22v4" stroke="#e0452c" stroke-width="2"/><path d="M157 23v4M154.500 25v2.500" stroke="#3b6fd0" stroke-width="2"/>';
out += text(164, 27, 'XAUUSD, M1:&#160; Gold vs US Dollar (spot)');
out += text(911, 27, 'QuantumGrid PRO', 'end');
out += '<path d="M914 24.500l5-2 4 1.500-5 2.500z" fill="#9bd8ff"/><path d="M915.500 25.500v2.500h6v-3l-3.500 1.500z" fill="#3ba0e6"/>';
out += text(138, 61, 'SELL 2.1 at 4138.54') + text(138, 89, 'TP') + text(138, 107, 'SELL 1.05 at 4134.91');
plot.innerHTML = out;
```
